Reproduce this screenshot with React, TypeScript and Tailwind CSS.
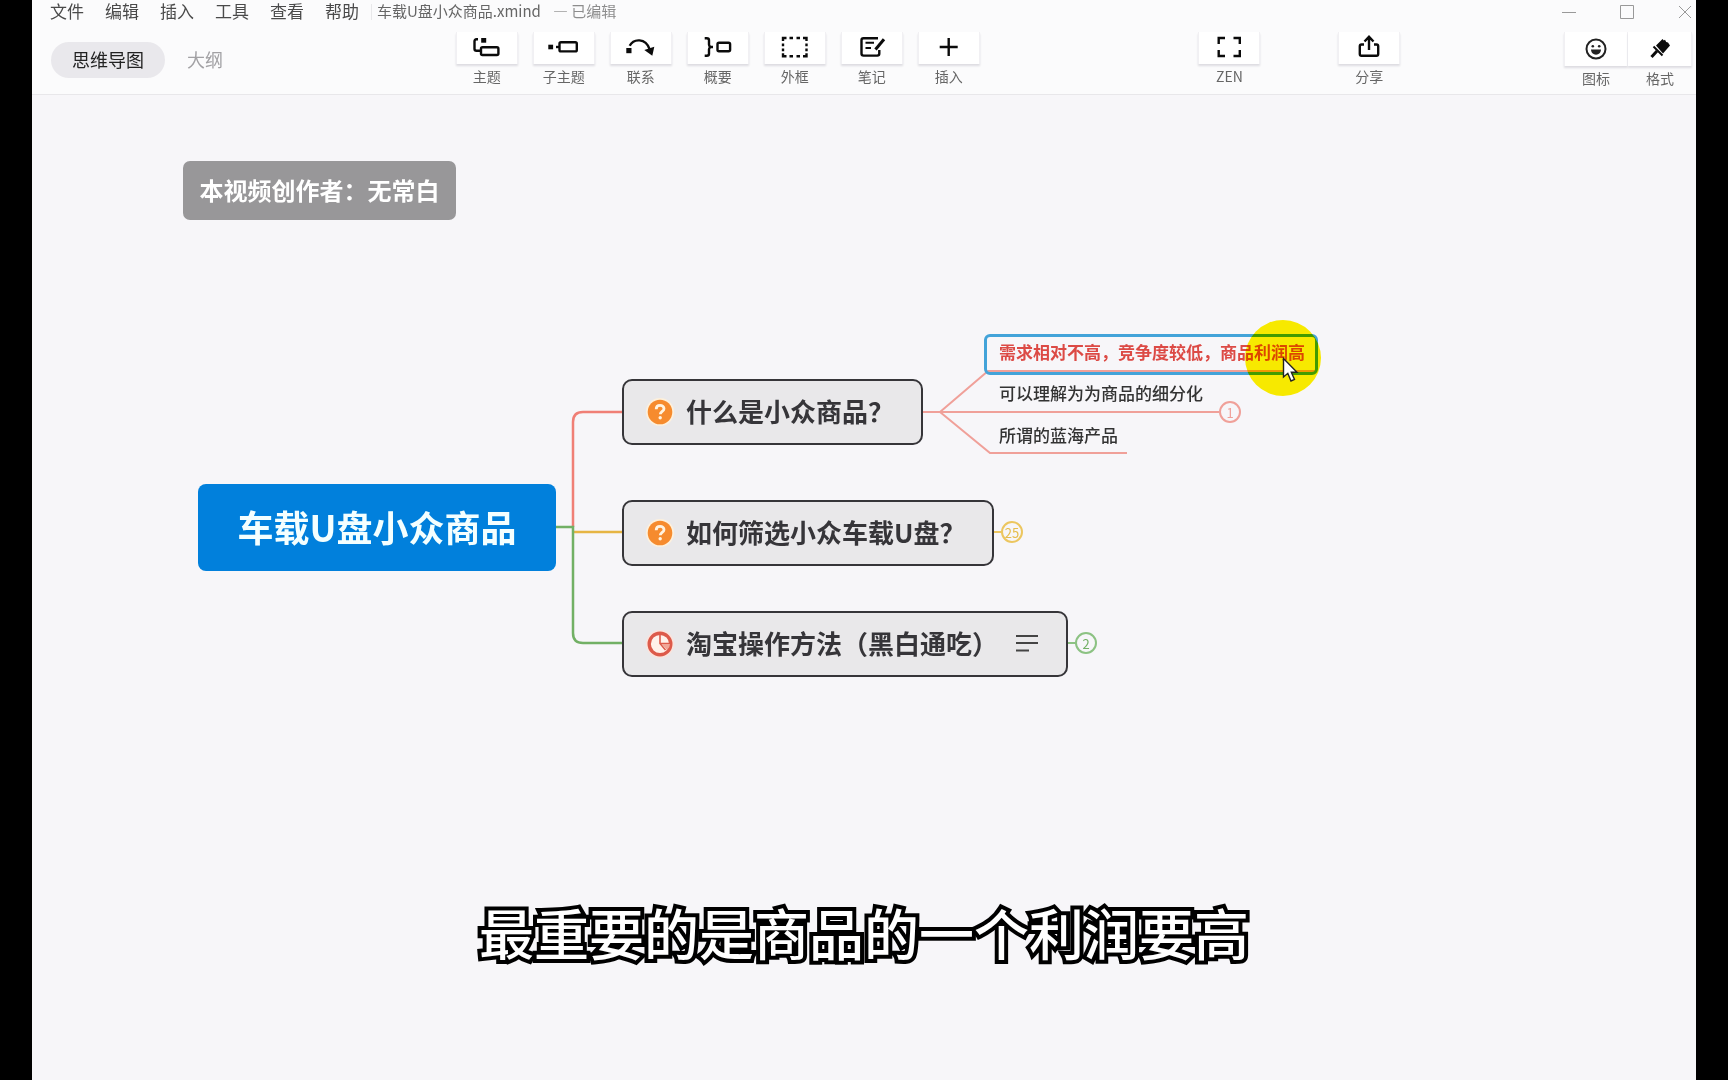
import type { ReactNode } from 'react'

interface ToolButtonProps {
  label: string
  children: ReactNode
}

interface TopicProps {
  title: string
  className: string
  icon: ReactNode
  children?: ReactNode
}

interface FoldBadgeProps {
  count: number
  className: string
}

const MENU_ITEMS = ['文件', '编辑', '插入', '工具', '查看', '帮助']

function ToolIcon({ children }: { children: ReactNode }) {
  return (
    <svg
      viewBox="0 0 32 24"
      className="w-8 h-6"
      fill="none"
      stroke="#0b0b0b"
      strokeWidth="2.4"
      aria-hidden="true"
    >
      {children}
    </svg>
  )
}

function ToolButton({ label, children }: ToolButtonProps) {
  return (
    <button type="button" className="flex flex-col items-center w-[62px]">
      <span className="flex items-center justify-center w-full h-8 pb-0.5 bg-white border-x border-[#f1f0f3] shadow-[0_2px_2px_#dddce2]">
        {children}
      </span>
      <span className="mt-0.5 text-sm leading-5 text-[#666]">{label}</span>
    </button>
  )
}

function QuestionMarker() {
  return (
    <svg viewBox="0 0 28 28" className="size-7 shrink-0" aria-hidden="true">
      <circle cx="14" cy="14" r="14" fill="#fdf0dc" />
      <circle cx="14" cy="14" r="12.3" fill="#f68b2e" />
      <path
        d="M10.2 11.2c0-2.4 1.7-3.8 3.9-3.8s3.900 1.400 3.900 3.400c0 2.600-3.700 2.700-3.700 5.400"
        fill="none"
        stroke="#fff3e0"
        strokeWidth="2.800"
      />
      <circle cx="14.200" cy="19.800" r="1.700" fill="#fff3e0" />
    </svg>
  )
}

function ProgressMarker() {
  return (
    <svg viewBox="0 0 28 28" className="size-7 shrink-0" aria-hidden="true">
      <circle cx="14" cy="14" r="14" fill="#fbe3dc" />
      <circle cx="14" cy="14" r="10.800" fill="#fff1ea" stroke="#dd5a4a" strokeWidth="3.400" />
      <path d="M14 4v9.500l5.500 6.500M14 13.500h10" fill="none" stroke="#dd5a4a" strokeWidth="1.600" />
      <path d="M15.500 14h8.500q0 3.500-3 6z" fill="#f0a596" />
    </svg>
  )
}

function Topic({ title, className, icon, children }: TopicProps) {
  return (
    <div
      className={`absolute flex items-center h-[66px] pl-[22px] rounded-[10px] border-2 border-[#363539] bg-[#e9e8ea] ${className}`}
    >
      {icon}
      <span className="ml-3 pb-0.5 text-[26px] leading-8 font-bold text-[#363539] whitespace-nowrap">
        {title}
      </span>
      {children}
    </div>
  )
}

function FoldBadge({ count, className }: FoldBadgeProps) {
  return (
    <button
      type="button"
      className={`absolute flex items-center justify-center size-[22px] rounded-full border-2 bg-[#f7f6f9] text-[13px] leading-none ${className}`}
    >
      {count}
    </button>
  )
}

function TitleBar() {
  return (
    <div className="flex items-center h-6 pl-[18px] pr-1">
      <nav className="flex gap-[21px] pb-0.5">
        {MENU_ITEMS.map(item => (
          <button key={item} type="button" className="text-[17px] leading-6 text-[#4a4a4a]">
            {item}
          </button>
        ))}
      </nav>
      <div className="w-px h-4 ml-3 mr-[5px] bg-[#e8e8ea]" />
      <h1 className="pb-0.5 text-[15px] leading-6 text-[#666]">车载U盘小众商品.xmind</h1>
      <span className="ml-3 pb-0.5 text-[15px] leading-6 text-[#8d8d8d]">— 已编辑</span>
      <div className="flex items-center gap-[44px] ml-auto">
        <button type="button" aria-label="最小化">
          <svg viewBox="0 0 14 14" className="size-3.5" stroke="#999">
            <path d="M0 7.500h14" />
          </svg>
        </button>
        <button type="button" aria-label="最大化">
          <svg viewBox="0 0 14 14" className="size-3.5" stroke="#999" fill="none">
            <path d="M.5.5h13v13H.5z" />
          </svg>
        </button>
        <button type="button" aria-label="关闭">
          <svg viewBox="0 0 14 14" className="size-3.5" stroke="#999">
            <path d="M1 1l12 12M13 1L1 13" />
          </svg>
        </button>
      </div>
    </div>
  )
}

function Toolbar() {
  return (
    <div className="flex items-start pt-2 pl-[19px] pr-1 h-[70px]">
      <div className="flex items-center gap-[22px] mt-[10px]">
        <button type="button" className="h-9 px-[21px] pb-0.5 rounded-full bg-[#e9e8ec] text-lg leading-[34px] text-[#222]">
          思维导图
        </button>
        <button type="button" className="pb-0.5 text-lg leading-[34px] text-[#a2a1a4]">
          大纲
        </button>
      </div>
      <div className="grow-[233]" />
      <div className="flex gap-[15px]">
        <ToolButton label="主题">
          <ToolIcon>
            <path d="M7 4.300H5.500q-2 0-2 2v7.400q0 2 2 2H10" />
            <rect x="10.200" y="3" width="5" height="4.700" fill="#0b0b0b" stroke="none" />
            <rect x="10" y="12.200" width="17.400" height="7.800" rx="1.500" />
          </ToolIcon>
        </ToolButton>
        <ToolButton label="子主题">
          <ToolIcon>
            <rect x="0.300" y="9.700" width="4.800" height="4.600" fill="#0b0b0b" stroke="none" />
            <path d="M8 12h3" />
            <rect x="11.500" y="7.200" width="17.300" height="9.200" rx="1.500" />
          </ToolIcon>
        </ToolButton>
        <ToolButton label="联系">
          <ToolIcon>
            <rect x="1.300" y="13" width="5.200" height="5.200" fill="#0b0b0b" stroke="none" />
            <path d="M4.700 10.700C8.500 3.500 20.500 2.500 24.700 14.300" />
            <path d="M19.300 15l10-3.300-2 9z" fill="#0b0b0b" stroke="none" />
          </ToolIcon>
        </ToolButton>
        <ToolButton label="概要">
          <ToolIcon>
            <path d="M2.700 3.200h2q2.300 0 2.300 2v4.300q0 1.500 1.500 2.500H11H8.500Q7 13 7 14.500v4.300q0 2-2.300 2h-2" />
            <rect x="15.500" y="7.700" width="12.600" height="8.600" rx="1.500" />
          </ToolIcon>
        </ToolButton>
        <ToolButton label="外框">
          <ToolIcon>
            <path d="M4 6V3h3.500M10.500 3H14M17.500 3H21M24 3h3.500v3M27.500 8.500v2.700M27.500 13.500v2.700M27.500 18.200v3H24M21 21.200h-3.500M14 21.200h-3.500M7.500 21.200H4v-3M4 16.200v-2.700M4 11.200V8.500" />
          </ToolIcon>
        </ToolButton>
        <ToolButton label="笔记">
          <ToolIcon>
            <path d="M22 3.200H7.500q-2 0-2 2v13.400q0 2 2 2h13.800q2 0 2-2V15" />
            <path d="M9.500 7.700H18M9.500 13H15" strokeWidth="2" />
            <path d="M19.500 14.500L28 4.200" strokeWidth="3" />
          </ToolIcon>
        </ToolButton>
        <ToolButton label="插入">
          <ToolIcon>
            <path d="M6.700 12h18M15.700 3v18" />
          </ToolIcon>
        </ToolButton>
      </div>
      <div className="grow-[219]" />
      <ToolButton label="ZEN">
        <ToolIcon>
          <path d="M5.700 9V3H12M20.500 3h6.300v6M26.800 15v6h-6.300M12 21H5.700v-6" />
        </ToolIcon>
      </ToolButton>
      <div className="grow-[78]" />
      <ToolButton label="分享">
        <ToolIcon>
          <path d="M11 9.500H8.500q-1.700 0-1.700 1.700v7.800q0 1.700 1.700 1.700h15q1.700 0 1.700-1.700v-7.800q0-1.700-1.700-1.700H21" />
          <path d="M16 15V2M11.500 6.500L16 1.800l4.500 4.700" />
        </ToolIcon>
      </ToolButton>
      <div className="grow-[164]" />
      <div className="flex text-sm text-[#666]">
        <button type="button" className="flex flex-col items-center w-16">
          <span className="flex items-center justify-center w-full h-[34px] bg-white border-x border-[#f1f0f3] shadow-[0_2px_2px_#dddce2]">
            <svg viewBox="0 0 24 24" className="size-6" fill="none" stroke="#222" strokeWidth="2" aria-hidden="true">
              <circle cx="12" cy="12" r="9.500" />
              <circle cx="8.800" cy="9.300" r="1.300" fill="#222" stroke="none" />
              <circle cx="15.200" cy="9.300" r="1.300" fill="#222" stroke="none" />
              <path d="M7 12.500h10c0 3-2.200 5.200-5 5.200s-5-2.200-5-5.200z" fill="#222" stroke="none" />
            </svg>
          </span>
          <span className="mt-0.5 leading-5">图标</span>
        </button>
        <button type="button" className="flex flex-col items-center w-16">
          <span className="flex items-center justify-center w-full h-[34px] bg-white border-r border-[#f1f0f3] shadow-[0_2px_2px_#dddce2]">
            <svg viewBox="0 0 24 24" className="size-6" fill="#0b0b0b" aria-hidden="true">
              <path d="M8 8.500L14.500 2l1.300 1.500 1.200-.7 1.200 2.200 1.800.5 2 3-7 8z" />
              <path d="M5.500 9.500l9 9" stroke="#0b0b0b" strokeWidth="2" />
              <path d="M9 14l-5.500 6" stroke="#0b0b0b" strokeWidth="3" />
            </svg>
          </span>
          <span className="mt-0.5 leading-5">格式</span>
        </button>
      </div>
    </div>
  )
}

function Connectors() {
  return (
    <svg className="absolute left-0 top-0" width="1300" height="620" fill="none" strokeWidth="2" aria-hidden="true">
      <path d="M541 432V327q0-10 10-10h40" stroke="#f07f76" strokeWidth="2.500" />
      <path d="M541 437h50" stroke="#e6b544" strokeWidth="2.500" />
      <path d="M524 432h17v106q0 10 10 10h40" stroke="#72b065" strokeWidth="2.500" />
      <path d="M891 317h296" stroke="#f0a099" />
      <path d="M908 317l48-41h328" stroke="#f0a099" />
      <path d="M908 317l50 41h137" stroke="#f0a099" />
      <path d="M962 437h8" stroke="#ecc65f" />
      <path d="M1036 548h8" stroke="#8cc283" />
    </svg>
  )
}

function Canvas() {
  return (
    <main className="relative grow bg-[#f7f6f9] overflow-hidden">
      <Connectors />

      <div className="absolute left-[151px] top-[66px] flex items-center justify-center w-[273px] h-[59px] pb-0.5 rounded-[7px] bg-[#989799] text-2xl font-bold text-white whitespace-nowrap">
        本视频创作者：无常白
      </div>

      <div className="absolute left-[166px] top-[389px] flex items-center justify-center w-[358px] h-[87px] pb-1 rounded-lg bg-[#0180dc] text-4xl font-bold text-[#f4ffff] whitespace-nowrap">
        车载U盘小众商品
      </div>

      <Topic
        title="什么是小众商品？"
        className="left-[590px] top-[284px] w-[301px]"
        icon={<QuestionMarker />}
      />
      <Topic
        title="如何筛选小众车载U盘？"
        className="left-[590px] top-[405px] w-[372px]"
        icon={<QuestionMarker />}
      />
      <Topic
        title="淘宝操作方法（黑白通吃）"
        className="left-[590px] top-[516px] w-[446px]"
        icon={<ProgressMarker />}
      >
        <svg viewBox="0 0 22 18" className="w-[22px] h-[18px] ml-auto mr-7" stroke="#444" strokeWidth="1.800" aria-hidden="true">
          <path d="M0 1h22M0 8h22M0 15.500h13" />
        </svg>
      </Topic>

      <FoldBadge count={1} className="left-[1187px] top-[306px] border-[#f0a099] text-[#f0a099]" />
      <FoldBadge count={25} className="left-[969px] top-[426px] border-[#ecc65f] text-[#e6bd4c]" />
      <FoldBadge count={2} className="left-[1043px] top-[537px] border-[#8cc283] text-[#72b065]" />

      <div className="absolute left-[952px] top-[239px] w-[334px] h-[41px] pl-3 rounded-md border-[3px] border-[#43a3d9] text-[17px] leading-[30px] font-bold text-[#dc4a45] whitespace-nowrap">
        需求相对不高，竞争度较低，商品利润高
      </div>
      <div className="absolute left-[967px] top-[286px] text-[17px] leading-6 font-medium text-[#333] whitespace-nowrap">
        可以理解为为商品的细分化
      </div>
      <div className="absolute left-[967px] top-[328px] text-[17px] leading-6 font-medium text-[#333] whitespace-nowrap">
        所谓的蓝海产品
      </div>

      {/* pointer highlight */}
      <div className="absolute left-[1213px] top-[225px] size-[76px] rounded-full bg-[#fff200] mix-blend-multiply" />
      <svg viewBox="0 0 18 26" className="absolute left-[1250px] top-[262px] w-[18px] h-[26px]" aria-hidden="true">
        <path
          d="M1.500 1.500v18.500l4.300-3.700 3.200 7.700 3.500-1.500-3.200-7.300h5.700z"
          fill="#fff"
          stroke="#222"
          strokeWidth="1.400"
        />
      </svg>

      <p className="absolute inset-x-0 bottom-[109px] text-center text-[55px] leading-[80px] font-medium text-white [-webkit-text-stroke:8px_#000] [paint-order:stroke_fill] [stroke-linejoin:round]">
        最重要的是商品的一个利润要高
      </p>
    </main>
  )
}

export default function App() {
  return (
    <div
      lang="zh-CN"
      className="flex flex-col min-h-screen px-8 bg-black font-['Noto_Sans_CJK_SC','Open_Sans',sans-serif]"
    >
      <header className="bg-[#fbfbfc] border-b border-[#e8e7ea]">
        <TitleBar />
        <Toolbar />
      </header>
      <Canvas />
    </div>
  )
}
